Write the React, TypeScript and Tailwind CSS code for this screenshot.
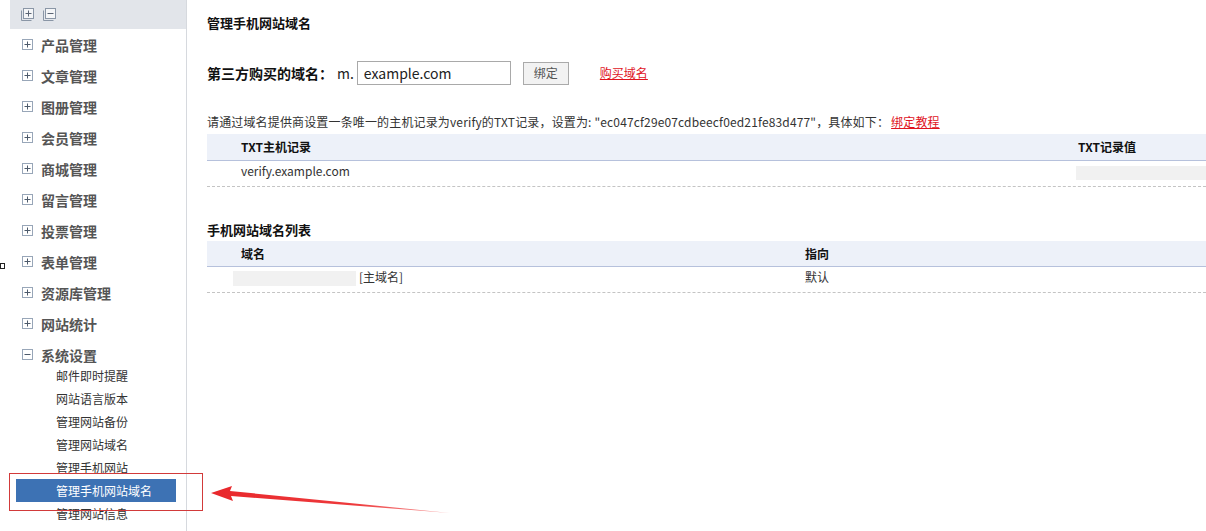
import React from "react";

const FONT = { fontFamily: '"Noto Sans CJK SC", "Noto Sans", sans-serif' };

function PlusBox({ minus = false }: { minus?: boolean }) {
  return (
    <svg width="11" height="11" viewBox="0 0 11 11" className="shrink-0">
      <rect x="0.5" y="0.5" width="10" height="10" fill="#fff" stroke="#98a6b8" />
      <line x1="2.5" y1="5.5" x2="8.5" y2="5.5" stroke="#4d5a6b" />
      {!minus && <line x1="5.5" y1="2.5" x2="5.5" y2="8.5" stroke="#4d5a6b" />}
    </svg>
  );
}

function DoubleBox({ minus = false }: { minus?: boolean }) {
  return (
    <svg width="13" height="13" viewBox="0 0 13 13">
      <path d="M0.5 2.5 V12.5 H10.5" fill="none" stroke="#8a96a6" />
      <rect x="2.5" y="0.5" width="10" height="10" fill="#f4f5f7" stroke="#8a96a6" />
      <line x1="4.5" y1="5.5" x2="10.5" y2="5.5" stroke="#5a6474" />
      {!minus && <line x1="7.5" y1="2.5" x2="7.5" y2="8.5" stroke="#5a6474" />}
    </svg>
  );
}

const menus = [
  "产品管理",
  "文章管理",
  "图册管理",
  "会员管理",
  "商城管理",
  "留言管理",
  "投票管理",
  "表单管理",
  "资源库管理",
  "网站统计",
];

const subs = [
  "邮件即时提醒",
  "网站语言版本",
  "管理网站备份",
  "管理网站域名",
  "管理手机网站",
  "管理手机网站域名",
  "管理网站信息",
];

export default function App() {
  return (
    <div className="relative flex w-[1206px] h-[531px] overflow-hidden bg-white text-[#333]" style={FONT}>
      {/* sidebar */}
      <div className="w-[187px] shrink-0 border-r border-[#d6d9de] pl-[10px]">
        <div className="h-[29px] bg-[#e2e5ea] flex items-center gap-[9px] pl-[11px]">
          <DoubleBox />
          <DoubleBox minus />
        </div>
        {menus.map((m) => (
          <div key={m} className="h-[31px] flex items-center pl-[12px]">
            <PlusBox />
            <span className="ml-[8px] text-[14px] font-bold text-[#555] leading-none">{m}</span>
          </div>
        ))}
        <div className="h-[31px] flex items-center pl-[12px]">
          <PlusBox minus />
          <span className="ml-[8px] text-[14px] font-bold text-[#555] leading-none">系统设置</span>
        </div>
        <div className="-mt-[6px]">
          {subs.map((s) => {
            const sel = s === "管理手机网站域名";
            return (
              <div
                key={s}
                className={
                  "h-[23px] ml-[6px] w-[160px] pl-[40px] flex items-center text-[12px] leading-none " +
                  (sel ? "bg-[#3d72b4] text-white" : "text-[#333]")
                }
              >
                {s}
              </div>
            );
          })}
        </div>
      </div>

      {/* main */}
      <div className="flex-1 pl-[20px] pt-[15px] text-[12px]">
        <div className="text-[13px] font-bold text-[#111] leading-[16px]">管理手机网站域名</div>

        <div className="mt-[30px] flex items-center h-[24px]">
          <span className="text-[14px] font-bold text-[#111]">第三方购买的域名：</span>
          <span className="ml-[4px] text-[14px] text-[#222]">m.</span>
          <div className="ml-[3px] w-[154px] h-[24px] border border-[#a9a9a9] flex items-center pl-[6px] text-[14px] text-[#222]">
            example.com
          </div>
          <div className="ml-[12px] w-[46px] h-[23px] border border-[#aaa] bg-[#f2f2f2] flex items-center justify-center text-[12px] text-[#555]">
            绑定
          </div>
          <span className="ml-[31px] text-[12px] text-[#e0141e] underline">购买域名</span>
        </div>

        <div className="mt-[29px] leading-[16px] text-[12px] text-[#333] whitespace-nowrap tracking-[0.15px]">
          请通过域名提供商设置一条唯一的主机记录为verify的TXT记录，设置为: "ec047cf29e07cdbeecf0ed21fe83d477"，具体如下：
          <span className="text-[#e0141e] underline ml-[2px]">绑定教程</span>
        </div>

        <div className="mt-[4px]">
          <div className="h-[27px] bg-[#edf1f9] border-b border-[#b6c1dc] flex items-center text-[12px] font-bold text-[#111]">
            <div className="w-[871px] pl-[34px]">TXT主机记录</div>
            <div>TXT记录值</div>
          </div>
          <div className="h-[26px] border-b border-dashed border-[#c4c4c4] flex items-start pt-[2px] text-[12px] text-[#333]">
            <div className="w-[869px] pl-[34px] leading-[16px]">verify.example.com</div>
            <div className="flex-1 h-[14px] mt-[3px] bg-[#f1f1f1]" />
          </div>
        </div>

        <div className="mt-[35px] text-[13px] font-bold text-[#111] leading-[16px]">手机网站域名列表</div>

        <div className="mt-[3px]">
          <div className="h-[26px] bg-[#edf1f9] border-b border-[#b6c1dc] flex items-center text-[12px] font-bold text-[#111]">
            <div className="w-[598px] pl-[34px]">域名</div>
            <div>指向</div>
          </div>
          <div className="h-[26px] border-b border-dashed border-[#c4c4c4] flex items-start pt-[2px] text-[12px] text-[#333]">
            <div className="w-[598px] pl-[26px] flex items-start">
              <div className="w-[123px] h-[15px] mt-[2px] bg-[#f1f1f1]" />
              <span className="ml-[3px] leading-[16px]">[主域名]</span>
            </div>
            <div className="leading-[16px]">默认</div>
          </div>
        </div>
      </div>

      {/* overlays */}
      <div className="absolute left-0 top-[263px] w-[5px] h-[6px] border border-[#222]" />
      <div className="absolute left-[9px] top-[473px] w-[194px] h-[38px] border border-[#d23a3a]" />
      <svg className="absolute left-[205px] top-[480px]" width="260" height="40" viewBox="0 0 260 40">
        <defs>
          <linearGradient id="ag" x1="0" x2="1" y1="0" y2="0">
            <stop offset="0" stopColor="#e8272b" />
            <stop offset="0.6" stopColor="#ee3a3c" />
            <stop offset="1" stopColor="#f7a0a0" />
          </linearGradient>
        </defs>
        <polygon points="6,13 27,6 25,11 245,33 26,16 28,21" fill="url(#ag)" />
      </svg>
    </div>
  );
}
